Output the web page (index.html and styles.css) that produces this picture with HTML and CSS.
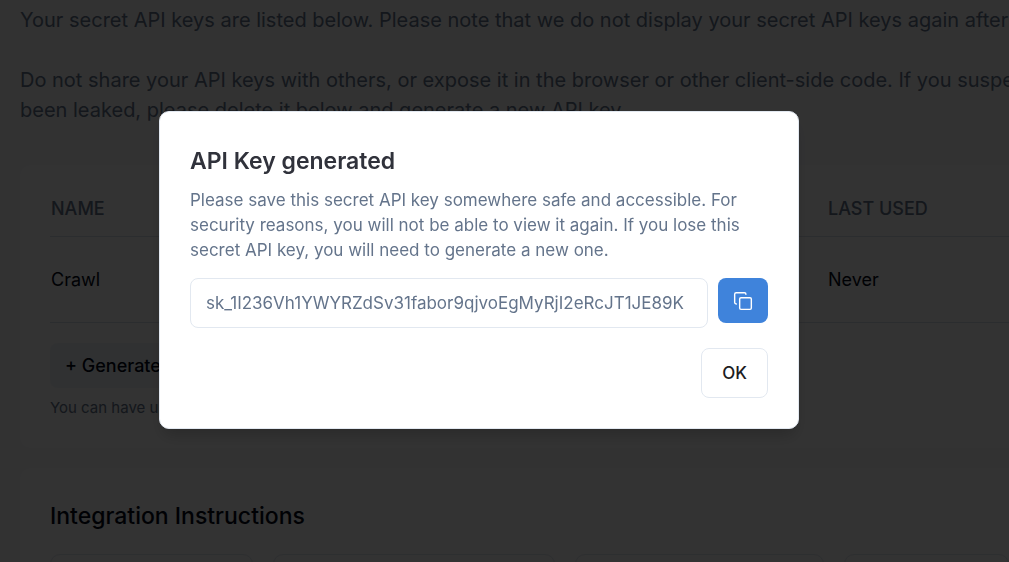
FILE: index.html
```html
<!DOCTYPE html>
<html lang="en">
<head>
  <meta charset="UTF-8">
  <meta name="viewport" content="width=device-width, initial-scale=1.0">
  <title>API Keys</title>
  <link rel="stylesheet" href="styles.css">
</head>
<body>

<main class="page">
  <div class="intro">
    <p>Your secret API keys are listed below. Please note that we do not display your secret API keys again after</p>
    <p>Do not share your API keys with others, or expose it in the browser or other client-side code. If you suspect<br>been leaked, please delete it below and generate a new API key.</p>
  </div>

  <section class="card keys-card">
    <table class="keys-table">
      <thead>
        <tr>
          <th scope="col">NAME</th>
          <th scope="col" class="last-used">LAST USED</th>
        </tr>
      </thead>
      <tbody>
        <tr>
          <td>Crawl</td>
          <td>Never</td>
        </tr>
      </tbody>
    </table>
    <button type="button" class="generate-button">+ Generate</button>
    <p class="hint">You can have up</p>
  </section>

  <section class="card">
    <h2>Integration Instructions</h2>
    <div class="tiles">
      <div class="tile"></div>
      <div class="tile"></div>
      <div class="tile"></div>
      <div class="tile"></div>
    </div>
  </section>
</main>

<div class="overlay">
  <div class="modal" role="dialog" aria-modal="true" aria-labelledby="modal-title">
    <h2 id="modal-title" class="modal-title">API Key generated</h2>
    <p class="modal-text">Please save this secret API key somewhere safe and accessible. For security reasons, you will not be able to view it again. If you lose this secret API key, you will need to generate a new one.</p>
    <div class="key-row">
      <input type="text" class="key-input" aria-label="API key" value="sk_1I236Vh1YWYRZdSv31fabor9qjvoEgMyRjI2eRcJT1JE89K" readonly>
      <button type="button" class="copy-button" aria-label="Copy">
        <svg width="20" height="20" viewBox="0 0 24 24" fill="none" stroke="currentColor" stroke-width="1.7" stroke-linecap="round" stroke-linejoin="round">
          <rect x="8" y="8" width="14" height="14" rx="1.6"/>
          <path d="M4 15.500c-1.100 0-2-.7-2-1.700V3.800C2 2.800 2.800 2 3.800 2h10c1 0 1.700.9 1.700 2"/>
        </svg>
      </button>
    </div>
    <div class="modal-footer">
      <button type="button" class="ok-button">OK</button>
    </div>
  </div>
</div>

</body>
</html>
```
FILE: styles.css
```css
* {
  box-sizing: border-box;
}

body {
  margin: 0;
  height: 100vh;
  overflow: hidden;
  background: #f8f9fb;
  color: #020817;
  font-family: Inter, "Liberation Sans", sans-serif;
}

h2, p {
  margin: 0;
}

button, input {
  font-family: inherit;
}

.page {
  padding: 5px 0 0 20px;
}

.intro {
  display: flex;
  flex-direction: column;
  gap: 30px;
  color: #64748b;
  font-size: 20px;
  line-height: 30px;
  white-space: nowrap;
}

.card {
  background: #fcfcfd;
  border-radius: 10px 0 0 10px;
  padding: 30px 0 30px 30px;
  margin-top: 20px;
}

.keys-card {
  margin-top: 40px;
  padding-top: 16px;
}

.keys-table {
  width: 100%;
  border-collapse: collapse;
  font-size: 18px;
  line-height: 25px;
  text-align: left;
}

.keys-table th {
  height: 55px;
  padding: 0 0 0 1px;
  color: #64748b;
  font-weight: 500;
  border-bottom: 1px solid #d8dfe8;
}

.keys-table td {
  height: 86px;
  padding: 0 0 0 1px;
  border-bottom: 1px solid #d8dfe8;
}

.keys-table .last-used {
  width: 182px;
}

.generate-button {
  display: block;
  width: 200px;
  height: 45px;
  margin-top: 20px;
  padding: 0 15px;
  border: none;
  border-radius: 8px;
  background: #f1f5f9;
  color: #020817;
  font-size: 18px;
  font-weight: 500;
  text-align: left;
}

.hint {
  margin-top: 10px;
  color: #64748b;
  font-size: 15px;
  line-height: 20px;
}

.card h2 {
  font-size: 23px;
  font-weight: 500;
  line-height: 36px;
}

.tiles {
  display: grid;
  grid-template-columns: 203px 282px 249px 1fr;
  gap: 20px;
  margin-top: 20px;
}

.tile {
  height: 120px;
  border: 1px solid #e2e8f0;
  border-radius: 10px;
}

.overlay {
  position: fixed;
  inset: 0;
  display: flex;
  justify-content: center;
  align-items: center;
  padding: 0 51px 22px 0;
  background: rgba(0, 0, 0, 0.8);
}

.modal {
  width: 100%;
  max-width: 640px;
  padding: 30px;
  background: #fff;
  border: 1px solid #e2e8f0;
  border-radius: 10px;
  box-shadow: 0 10px 16px -4px rgba(0, 0, 0, 0.2);
}

.modal-title {
  color: #30323b;
  font-size: 23px;
  font-weight: 600;
  line-height: 38px;
}

.modal-text {
  margin-top: 8px;
  color: #64748b;
  font-size: 17px;
  line-height: 25px;
}

.key-row {
  display: flex;
  align-items: flex-start;
  gap: 10px;
  margin-top: 15px;
}

.key-input {
  flex: 1;
  min-width: 0;
  height: 50px;
  padding: 0 15px;
  border: 1px solid #e2e8f0;
  border-radius: 8px;
  background: #fff;
  color: #64748b;
  font-size: 17px;
}

.copy-button {
  display: flex;
  justify-content: center;
  align-items: center;
  width: 50px;
  height: 45px;
  padding: 0;
  border: none;
  border-radius: 8px;
  background: #3f83db;
  color: #fff;
}

.modal-footer {
  display: flex;
  justify-content: flex-end;
  margin-top: 20px;
}

.ok-button {
  height: 50px;
  padding: 0 20px;
  border: 1px solid #e2e8f0;
  border-radius: 8px;
  background: #fff;
  color: #1c1c22;
  font-size: 17px;
  font-weight: 500;
}
```
